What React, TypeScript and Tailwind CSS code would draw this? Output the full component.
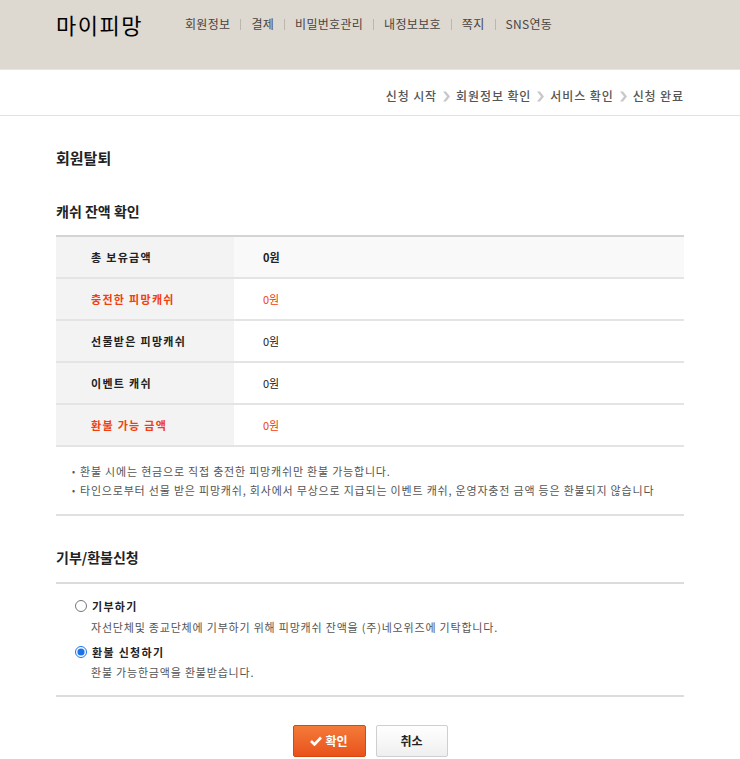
import React from "react";

const font = { fontFamily: '"Noto Sans CJK KR", "Noto Sans", sans-serif' };

function Chevron() {
  return (
    <svg width="9" height="11" viewBox="0 0 9 11" className="mx-[5px] inline-block">
      <path d="M1 0.5 L5 5.5 L1 10.5 H4 L8 5.5 L4 0.5 Z" fill="#c8c8c8" />
    </svg>
  );
}

const navItems = ["회원정보", "결제", "비밀번호관리", "내정보보호", "쪽지", "SNS연동"];

const rows = [
  { label: "총 보유금액", value: "0원", red: false, first: true },
  { label: "충전한 피망캐쉬", value: "0원", red: true },
  { label: "선물받은 피망캐쉬", value: "0원", red: false },
  { label: "이벤트 캐쉬", value: "0원", red: false },
  { label: "환불 가능 금액", value: "0원", red: true },
];

export default function App() {
  return (
    <div className="w-[740px] min-h-[759px] bg-white text-[#222]" style={font}>
      <div className="h-[70px] bg-[#ddd8d0] border-b border-[#e8e4de]">
        <div className="w-[628px] mx-auto flex items-center pt-[9px]">
          <div className="text-[22px] leading-[30px] text-black tracking-[1.5px] w-[129px]">마이피망</div>
          <div className="flex items-center text-[12px] text-[#4a4440] tracking-[0.3px]">
            {navItems.map((n, i) => (
              <React.Fragment key={n}>
                {i > 0 && <span className="mx-[10px] h-[11px] w-px bg-[#bdb6ac]" />}
                <span>{n}</span>
              </React.Fragment>
            ))}
          </div>
        </div>
      </div>

      <div className="h-[46px] border-b border-[#e2e2e2]">
        <div className="w-[628px] mx-auto flex justify-end items-center pt-[17px] text-[12px] text-[#555] font-medium tracking-[0.9px]">
          <span>신청 시작</span>
          <Chevron />
          <span>회원정보 확인</span>
          <Chevron />
          <span>서비스 확인</span>
          <Chevron />
          <span>신청 완료</span>
        </div>
      </div>

      <div className="w-[628px] mx-auto">
        <h1 className="mt-[32px] text-[15px] leading-[20px] font-bold text-[#222]">회원탈퇴</h1>
        <h2 className="mt-[33px] text-[14px] leading-[20px] font-bold text-[#222]">캐쉬 잔액 확인</h2>

        <div className="mt-[14px] border-t-2 border-[#d4d4d4]">
          {rows.map((r) => (
            <div key={r.label} className="flex h-[42px] border-b-2 border-[#e4e4e4]">
              <div
                className={`w-[178px] bg-[#f3f3f3] flex items-center pl-[35px] text-[11px] font-bold tracking-[1.3px] ${
                  r.red ? "text-[#f0400f]" : "text-[#222]"
                }`}
              >
                {r.label}
              </div>
              <div
                className={`flex-1 flex items-center pl-[29px] text-[11px] ${r.first ? "bg-[#f9f9f9] font-bold" : "bg-white"} ${
                  r.red ? "text-[#f0400f]" : "text-[#222]"
                }`}
              >
                {r.value}
              </div>
            </div>
          ))}
        </div>

        <div className="pt-[15px] pb-[14px] pl-[16px] text-[11px] leading-[19px] text-[#555] tracking-[0.8px] border-b-2 border-[#e0e0e0]">
          <p className="flex">
            <span className="w-[8px] text-[9px]">•</span>
            <span>환불 시에는 현금으로 직접 충전한 피망캐쉬만 환불 가능합니다.</span>
          </p>
          <p className="flex">
            <span className="w-[8px] text-[9px]">•</span>
            <span>타인으로부터 선물 받은 피망캐쉬, 회사에서 무상으로 지급되는 이벤트 캐쉬, 운영자충전 금액 등은 환불되지 않습니다</span>
          </p>
        </div>

        <h2 className="mt-[31px] text-[14px] leading-[20px] font-bold text-[#222]">기부/환불신청</h2>

        <div className="mt-[15px] border-t-2 border-[#dcdcdc] border-b-2 pt-[14px] pb-[15px] pl-[19px]">
          <label className="flex items-center h-[16px]">
            <input type="radio" name="opt" className="w-[12px] h-[12px] m-0 accent-[#1a73e8]" />
            <span className="ml-[5px] text-[11px] font-bold text-[#222] tracking-[1.3px]">기부하기</span>
          </label>
          <p className="ml-[16px] mt-[5px] text-[11px] leading-[16px] text-[#555] tracking-[0.8px]">
            자선단체및 종교단체에 기부하기 위해 피망캐쉬 잔액을 (주)네오위즈에 기탁합니다.
          </p>
          <label className="flex items-center h-[16px] mt-[9px]">
            <input type="radio" name="opt" defaultChecked className="w-[12px] h-[12px] m-0 accent-[#1a73e8]" />
            <span className="ml-[5px] text-[11px] font-bold text-[#222] tracking-[1.3px]">환불 신청하기</span>
          </label>
          <p className="ml-[16px] mt-[4px] text-[11px] leading-[16px] text-[#555] tracking-[0.8px]">
            환불 가능한금액을 환불받습니다.
          </p>
        </div>

        <div className="mt-[28px] flex justify-center gap-[10px]">
          <button className="w-[73px] h-[32px] flex items-center justify-center gap-[3px] rounded-[2px] border border-[#d9470f] bg-gradient-to-b from-[#f47a38] to-[#e8521b] text-white text-[12px] font-bold">
            <svg width="12" height="10" viewBox="0 0 12 10">
              <path d="M1 5 L4.5 8.5 L11 1.5" stroke="white" strokeWidth="2.6" fill="none" />
            </svg>
            확인
          </button>
          <button className="w-[72px] h-[32px] rounded-[2px] border border-[#cfcfcf] bg-gradient-to-b from-white to-[#efefef] text-[#222] text-[12px] font-bold">
            취소
          </button>
        </div>
      </div>
    </div>
  );
}
